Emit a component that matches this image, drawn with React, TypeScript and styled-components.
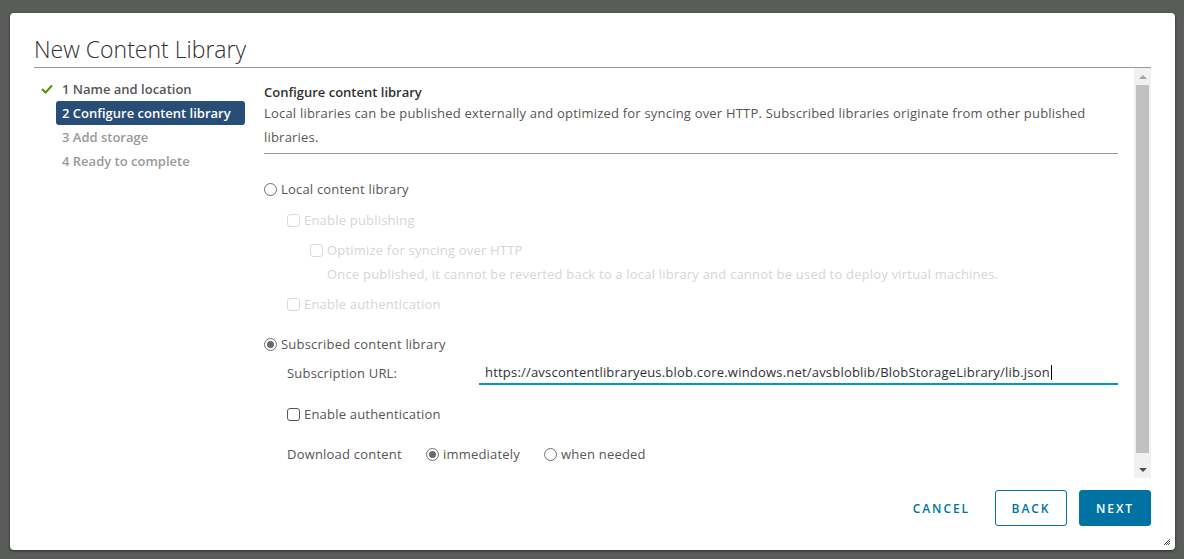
import React from "react";
import styled, { createGlobalStyle } from "styled-components";

const GlobalStyle = createGlobalStyle`
  html, body { margin: 0; padding: 0; }
  body {
    background: #595c59;
    font-family: "Open Sans", "Noto Sans", sans-serif;
    color: #565656;
    -webkit-font-smoothing: antialiased;
  }
  * { box-sizing: border-box; }
`;

const Page = styled.div`
  width: 1184px;
  height: 559px;
  padding: 13px 9px 9px 10px;
`;

const Dialog = styled.div`
  position: relative;
  width: 1165px;
  height: 537px;
  background: #ffffff;
  border-radius: 4px;
  box-shadow: 0 1px 3px rgba(0, 0, 0, 0.5);
  padding: 0 24px 0 24px;
  display: flex;
  flex-direction: column;
`;

const Header = styled.div`
  height: 55px;
  border-bottom: 1px solid #9a9a9a;
  display: flex;
  align-items: flex-end;
  padding-bottom: 3px;
`;

const Title = styled.h1`
  margin: 0;
  font-family: "Open Sans", sans-serif;
  font-weight: 300;
  font-size: 23px;
  line-height: 30px;
  color: #313131;
`;

const Body = styled.div`
  display: flex;
  height: 410px;
`;

const Sidebar = styled.ul`
  list-style: none;
  margin: 0;
  padding: 9px 0 0 0;
  width: 230px;
  flex: none;
`;

const Step = styled.li`
  display: flex;
  align-items: center;
  height: 24px;
`;

const StepIcon = styled.span`
  width: 22px;
  display: flex;
  justify-content: center;
  padding-left: 3px;
`;

const StepLabel = styled.span<{ $state: "done" | "current" | "todo" }>`
  width: 189px;
  height: 24px;
  line-height: 24px;
  padding: 0 6px;
  border-radius: 3px;
  font-size: 13px;
  font-weight: 600;
  color: ${(p) =>
    p.$state === "current" ? "#ffffff" : p.$state === "done" ? "#565656" : "#9a9a9a"};
  background: ${(p) => (p.$state === "current" ? "#284d76" : "transparent")};
`;

const Main = styled.div`
  flex: 1;
  display: flex;
  min-width: 0;
`;

const Content = styled.div`
  width: 854px;
  flex: none;
  padding-top: 12px;
  font-size: 13px;
  line-height: 24px;
  letter-spacing: 0.2px;
  color: #565656;
`;

const SectionTitle = styled.div`
  font-weight: 600;
  letter-spacing: 0;
  color: #313131;
`;

const Intro = styled.p`
  margin: -3px 0 0 0;
  padding-bottom: 4px;
  border-bottom: 1px solid #9a9a9a;
`;

const Row = styled.div<{ $top: number; $indent?: number; $disabled?: boolean }>`
  display: flex;
  align-items: center;
  height: 24px;
  margin-top: ${(p) => p.$top}px;
  padding-left: ${(p) => p.$indent ?? 0}px;
  color: ${(p) => (p.$disabled ? "#d6d6d6" : "#565656")};
  white-space: nowrap;
`;

const Radio = styled.span<{ $checked?: boolean }>`
  width: 13px;
  height: 13px;
  border-radius: 50%;
  border: 1px solid #6f6f6f;
  margin-right: 4px;
  flex: none;
  display: flex;
  align-items: center;
  justify-content: center;
  background: #fff;
  &::after {
    content: "";
    width: 7px;
    height: 7px;
    border-radius: 50%;
    background: ${(p) => (p.$checked ? "#6a6a6a" : "transparent")};
  }
`;

const Checkbox = styled.span<{ $disabled?: boolean }>`
  width: 13px;
  height: 13px;
  border-radius: 3px;
  border: 1px solid ${(p) => (p.$disabled ? "#dadada" : "#565656")};
  margin-right: 4px;
  flex: none;
`;

const FieldLabel = styled.span<{ $width: number }>`
  width: ${(p) => p.$width}px;
  flex: none;
`;

const UrlInput = styled.div`
  flex: 1;
  height: 24px;
  padding: 0 6px;
  border-bottom: 2px solid #0095d3;
  color: #313131;
  white-space: nowrap;
  display: flex;
  align-items: center;
`;

const Caret = styled.span`
  display: inline-block;
  width: 1px;
  height: 15px;
  background: #000;
  margin-left: 1px;
`;

const Option = styled.span<{ $gap?: number }>`
  display: flex;
  align-items: center;
  margin-right: ${(p) => p.$gap ?? 0}px;
`;

const Scrollbar = styled.div`
  margin-left: 16px;
  width: 17px;
  background: #f1f1f1;
  display: flex;
  flex-direction: column;
  align-items: center;
`;

const ScrollArrow = styled.div<{ $up?: boolean }>`
  height: 17px;
  width: 17px;
  display: flex;
  align-items: center;
  justify-content: center;
  &::after {
    content: "";
    border-left: 4px solid transparent;
    border-right: 4px solid transparent;
    ${(p) =>
      p.$up ? "border-bottom: 4px solid #a3a3a3;" : "border-top: 4px solid #505050;"}
  }
`;

const ScrollTrack = styled.div`
  flex: 1;
  width: 13px;
  display: flex;
  flex-direction: column;
`;

const ScrollThumb = styled.div`
  height: 368px;
  background: #c1c1c1;
`;

const Footer = styled.div`
  display: flex;
  justify-content: flex-end;
  padding-top: 12px;
`;

const Button = styled.button<{ $variant: "flat" | "outline" | "solid" }>`
  height: 36px;
  min-width: 72px;
  padding: 0 12px;
  margin-left: 12px;
  border-radius: 3px;
  font-family: "Open Sans", sans-serif;
  font-size: 12px;
  font-weight: 600;
  letter-spacing: 0.16em;
  text-transform: uppercase;
  cursor: pointer;
  border: 1px solid ${(p) => (p.$variant === "flat" ? "transparent" : "#0072a3")};
  background: ${(p) => (p.$variant === "solid" ? "#0072a3" : "transparent")};
  color: ${(p) => (p.$variant === "solid" ? "#ffffff" : "#0072a3")};
`;

const ResizeGrip = styled.svg`
  position: absolute;
  right: 4px;
  bottom: 4px;
`;

export default function App() {
  return (
    <>
      <GlobalStyle />
      <Page>
        <Dialog>
          <Header>
            <Title>New Content Library</Title>
          </Header>
          <Body>
            <Sidebar>
              <Step>
                <StepIcon>
                  <svg width="12" height="10" viewBox="0 0 12 10">
                    <polyline
                      points="1,5 4.5,8.5 11,1.5"
                      fill="none"
                      stroke="#48960c"
                      strokeWidth="2"
                    />
                  </svg>
                </StepIcon>
                <StepLabel $state="done">1 Name and location</StepLabel>
              </Step>
              <Step>
                <StepIcon />
                <StepLabel $state="current">2 Configure content library</StepLabel>
              </Step>
              <Step>
                <StepIcon />
                <StepLabel $state="todo">3 Add storage</StepLabel>
              </Step>
              <Step>
                <StepIcon />
                <StepLabel $state="todo">4 Ready to complete</StepLabel>
              </Step>
            </Sidebar>
            <Main>
              <Content>
                <SectionTitle>Configure content library</SectionTitle>
                <Intro>
                  Local libraries can be published externally and optimized for syncing
                  over HTTP. Subscribed libraries originate from other published libraries.
                </Intro>
                <Row $top={23}>
                  <Radio />
                  Local content library
                </Row>
                <Row $top={7} $indent={23} $disabled>
                  <Checkbox $disabled />
                  Enable publishing
                </Row>
                <Row $top={6} $indent={46} $disabled>
                  <Checkbox $disabled />
                  Optimize for syncing over HTTP
                </Row>
                <Row $top={0} $indent={63} $disabled>
                  Once published, it cannot be reverted back to a local library and cannot be
                  used to deploy virtual machines.
                </Row>
                <Row $top={6} $indent={23} $disabled>
                  <Checkbox $disabled />
                  Enable authentication
                </Row>
                <Row $top={16}>
                  <Radio $checked />
                  Subscribed content library
                </Row>
                <Row $top={5} $indent={23}>
                  <FieldLabel $width={192}>Subscription URL:</FieldLabel>
                  <UrlInput>
                    https://avscontentlibraryeus.blob.core.windows.net/avsbloblib/BlobStorageLibrary/lib.json
                    <Caret />
                  </UrlInput>
                </Row>
                <Row $top={17} $indent={23}>
                  <Checkbox />
                  Enable authentication
                </Row>
                <Row $top={16} $indent={23}>
                  <FieldLabel $width={139}>Download content</FieldLabel>
                  <Option $gap={24}>
                    <Radio $checked />
                    immediately
                  </Option>
                  <Option>
                    <Radio />
                    when needed
                  </Option>
                </Row>
              </Content>
              <Scrollbar>
                <ScrollArrow $up />
                <ScrollTrack>
                  <ScrollThumb />
                </ScrollTrack>
                <ScrollArrow />
              </Scrollbar>
            </Main>
          </Body>
          <Footer>
            <Button $variant="flat">Cancel</Button>
            <Button $variant="outline">Back</Button>
            <Button $variant="solid">Next</Button>
          </Footer>
          <ResizeGrip width="8" height="8" viewBox="0 0 8 8">
            <path d="M7 1 L1 7 M7 3 L3 7 M7 5 L5 7" stroke="#555" strokeWidth="1" />
          </ResizeGrip>
        </Dialog>
      </Page>
    </>
  );
}
